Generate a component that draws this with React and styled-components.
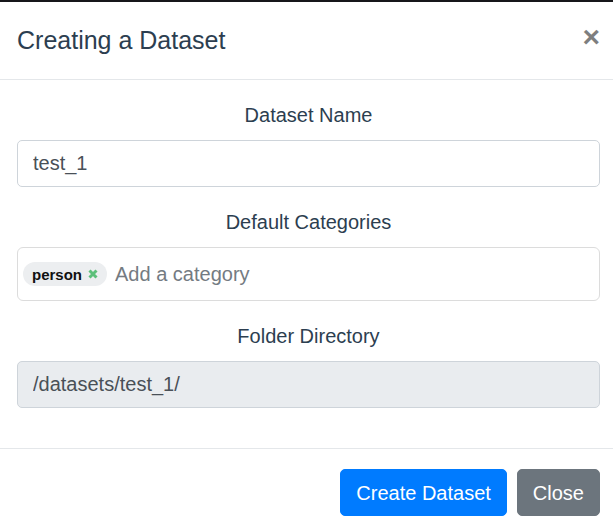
import React, { useState } from 'react';
import styled, { createGlobalStyle } from 'styled-components';

const GlobalStyle = createGlobalStyle`
  html, body {
    margin: 0;
    padding: 0;
    background: #fff;
    overflow: hidden;
  }
  body {
    font-family: "Liberation Sans", Arial, Helvetica, sans-serif;
    color: #2c3e50;
  }
  * {
    box-sizing: border-box;
  }
`;

const TopStrip = styled.div`
  height: 2px;
  background: #17171a;
`;

const Modal = styled.div`
  width: 623px;
  margin-left: -3px;
  background: #fff;
`;

const Header = styled.div`
  display: flex;
  align-items: flex-start;
  padding: 20px;
  border-bottom: 1px solid #e4e7ea;
`;

const Title = styled.h5`
  margin: 0;
  font-size: 25px;
  line-height: 37px;
  font-weight: 400;
  color: #2c3e50;
`;

const CloseX = styled.button`
  margin: -20px -20px -20px auto;
  padding: 20px;
  background: transparent;
  border: 0;
  font-family: "Liberation Sans", Arial, sans-serif;
  font-size: 30px;
  font-weight: 700;
  line-height: 1;
  color: #000;
  opacity: 0.5;
  text-shadow: 0 1px 0 #fff;
  cursor: pointer;
`;

const Body = styled.div`
  padding: 20px;
`;

const Group = styled.div`
  margin-bottom: 20px;
`;

const Label = styled.label`
  display: block;
  margin-bottom: 10px;
  font-size: 20px;
  line-height: 30px;
  text-align: center;
  color: #2c3e50;
`;

const Input = styled.input`
  display: block;
  width: 100%;
  height: 47px;
  padding: 7.5px 15px;
  font-family: "Liberation Sans", Arial, sans-serif;
  font-size: 20px;
  line-height: 1.5;
  color: #495057;
  background: ${(p) => (p.disabled ? '#e9ecef' : '#fff')};
  border: 1px solid #ced4da;
  border-radius: 5px;
  outline: none;
`;

const TagsBox = styled.div`
  display: flex;
  align-items: center;
  gap: 8px;
  height: 54px;
  padding: 0 5px;
  border: 1px solid #dcdcdc;
  border-radius: 6px;
`;

const Tag = styled.span`
  display: inline-flex;
  align-items: center;
  gap: 6px;
  height: 24px;
  padding: 0 9px 0 9px;
  border-radius: 12px;
  background: #eceef0;
  font-size: 15px;
  font-weight: 700;
  color: #111;
`;

const TagInput = styled.input`
  flex: 1;
  border: 0;
  outline: none;
  padding: 0;
  font-family: "Liberation Sans", Arial, sans-serif;
  font-size: 20px;
  color: #495057;
  &::placeholder {
    color: #747b82;
  }
`;

const Footer = styled.div`
  display: flex;
  justify-content: flex-end;
  align-items: center;
  padding: 15px;
  border-top: 1px solid #e4e7ea;
`;

const Button = styled.button`
  margin: 5px;
  padding: 7.5px 15px;
  font-family: "Liberation Sans", Arial, sans-serif;
  font-size: 20px;
  line-height: 1.5;
  color: #fff;
  background: ${(p) => p.bg};
  border: 1px solid ${(p) => p.bg};
  border-radius: 5px;
  cursor: pointer;
`;

const RemoveIcon = () => (
  <svg width="10" height="10" viewBox="0 0 10 10">
    <path d="M1.5 1.5 L8.5 8.5 M8.5 1.5 L1.5 8.5" stroke="#5cc07a" strokeWidth="3" strokeLinecap="butt" />
  </svg>
);

const App = () => {
  const [name, setName] = useState('test_1');
  const [tags] = useState(['person']);

  return (
    <>
      <GlobalStyle />
      <TopStrip />
      <Modal>
        <Header>
          <Title>Creating a Dataset</Title>
          <CloseX>×</CloseX>
        </Header>
        <Body>
          <Group>
            <Label>Dataset Name</Label>
            <Input value={name} onChange={(e) => setName(e.target.value)} />
          </Group>
          <Group>
            <Label>Default Categories</Label>
            <TagsBox>
              {tags.map((t) => (
                <Tag key={t}>
                  {t}
                  <RemoveIcon />
                </Tag>
              ))}
              <TagInput placeholder="Add a category" />
            </TagsBox>
          </Group>
          <Group>
            <Label>Folder Directory</Label>
            <Input disabled value={`/datasets/${name}/`} readOnly />
          </Group>
        </Body>
        <Footer>
          <Button bg="#007bff">Create Dataset</Button>
          <Button bg="#6c757d">Close</Button>
        </Footer>
      </Modal>
    </>
  );
};

export default App;
